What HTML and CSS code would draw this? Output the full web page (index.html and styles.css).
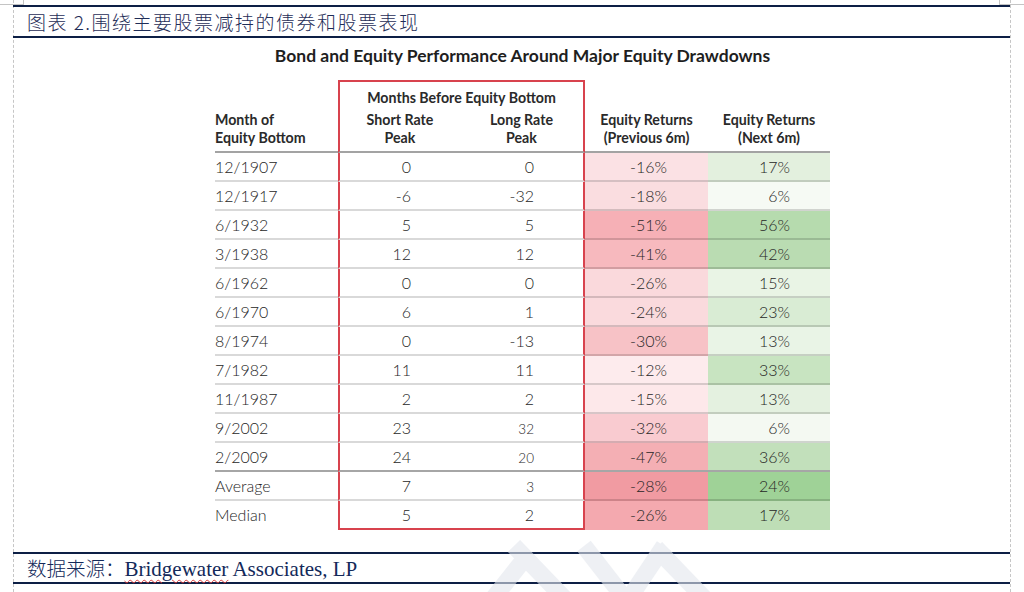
FILE: index.html
```html
<!DOCTYPE html>
<html lang="zh">
<head>
<meta charset="utf-8">
<title>图表 2.围绕主要股票减持的债券和股票表现</title>
<link rel="stylesheet" href="styles.css">
</head>
<body>
<div class="page">
  <span class="corner corner-tl"></span>
  <span class="corner corner-tr"></span>
  <div class="sheet">
    <div class="caption">图表 2.围绕主要股票减持的债券和股票表现</div>
    <div class="figure">
      <h1 class="chart-title">Bond and Equity Performance Around Major Equity Drawdowns</h1>
      <table class="perf">
        <colgroup>
          <col class="c-month"><col class="c-short"><col class="c-long"><col class="c-prev"><col class="c-next">
        </colgroup>
        <thead>
          <tr>
            <th rowspan="2" class="h-month">Month of<br>Equity Bottom</th>
            <th colspan="2" class="h-group">Months Before Equity Bottom</th>
            <th rowspan="2" class="h-ret">Equity Returns<br>(Previous 6m)</th>
            <th rowspan="2" class="h-ret">Equity Returns<br>(Next 6m)</th>
          </tr>
          <tr>
            <th class="h-sub short">Short Rate<br>Peak</th>
            <th class="h-sub long">Long Rate<br>Peak</th>
          </tr>
        </thead>
        <tbody>
          <tr><td class="month">12/1907</td><td class="short">0</td><td class="long">0</td><td class="prev" style="background:#fbe1e4">-16%</td><td class="next" style="background:#e3f0de">17%</td></tr>
          <tr><td class="month">12/1917</td><td class="short">-6</td><td class="long">-32</td><td class="prev" style="background:#fadde0">-18%</td><td class="next" style="background:#f6faf4">6%</td></tr>
          <tr><td class="month">6/1932</td><td class="short">5</td><td class="long">5</td><td class="prev" style="background:#f6b0b6">-51%</td><td class="next" style="background:#b6dbae">56%</td></tr>
          <tr><td class="month">3/1938</td><td class="short">12</td><td class="long">12</td><td class="prev" style="background:#f7b9be">-41%</td><td class="next" style="background:#badcb2">42%</td></tr>
          <tr><td class="month">6/1962</td><td class="short">0</td><td class="long">0</td><td class="prev" style="background:#fad9dc">-26%</td><td class="next" style="background:#e9f4e5">15%</td></tr>
          <tr><td class="month">6/1970</td><td class="short">6</td><td class="long">1</td><td class="prev" style="background:#fadadd">-24%</td><td class="next" style="background:#d9ecd4">23%</td></tr>
          <tr><td class="month">8/1974</td><td class="short">0</td><td class="long">-13</td><td class="prev" style="background:#f7c2c6">-30%</td><td class="next" style="background:#e9f4e6">13%</td></tr>
          <tr><td class="month">7/1982</td><td class="short">11</td><td class="long">11</td><td class="prev" style="background:#fdebed">-12%</td><td class="next" style="background:#c8e4c1">33%</td></tr>
          <tr><td class="month">11/1987</td><td class="short">2</td><td class="long">2</td><td class="prev" style="background:#fde8ea">-15%</td><td class="next" style="background:#e4f1e0">13%</td></tr>
          <tr><td class="month">9/2002</td><td class="short">23</td><td class="long"><span class="small">32</span></td><td class="prev" style="background:#f9cbd0">-32%</td><td class="next" style="background:#f4f9f2">6%</td></tr>
          <tr class="before-summary"><td class="month">2/2009</td><td class="short">24</td><td class="long"><span class="small">20</span></td><td class="prev" style="background:#f4afb4">-47%</td><td class="next" style="background:#c2e0bb">36%</td></tr>
          <tr><td class="month">Average</td><td class="short">7</td><td class="long"><span class="small">3</span></td><td class="prev" style="background:#f19ba2">-28%</td><td class="next" style="background:#9fd297">24%</td></tr>
          <tr class="last"><td class="month">Median</td><td class="short">5</td><td class="long">2</td><td class="prev" style="background:#f4a9af">-26%</td><td class="next" style="background:#bedeb6">17%</td></tr>
        </tbody>
      </table>
    </div>
    <div class="source"><span class="source-label">数据来源：</span><span class="spell">Bridgewater</span> Associates, LP</div>
  </div>
  <svg class="watermark" width="1024" height="592" viewBox="0 0 1024 592" aria-hidden="true">
    <g stroke="#e3e7ee" stroke-width="17" stroke-linecap="butt" opacity="0.6">
      <line x1="492" y1="600" x2="522" y2="562"/>
      <line x1="514" y1="546" x2="566" y2="600"/>
      <line x1="584" y1="546" x2="626" y2="600"/>
      <line x1="664" y1="546" x2="628" y2="600"/>
      <line x1="656" y1="548" x2="706" y2="600"/>
    </g>
  </svg>
</div>
</body>
</html>
```

FILE: styles.css
```css
* {
  box-sizing: border-box;
}

html,
body {
  margin: 0;
  padding: 0;
  background: #ffffff;
}

body {
  width: 1024px;
  height: 592px;
  overflow: hidden;
  font-family: Lato, "Noto Sans", sans-serif;
}

.page {
  position: relative;
  height: 592px;
  padding-left: 13px;
}

.corner {
  position: absolute;
  width: 24px;
  height: 5px;
  border-color: #c4c4c4;
  border-style: solid;
  border-width: 0;
}

.corner-tl {
  left: 0;
  top: 0;
  border-right-width: 1px;
  border-bottom-width: 1px;
}

.corner-tr {
  left: 999px;
  top: 0;
  width: 25px;
  border-left-width: 1px;
  border-bottom-width: 1px;
}

.sheet {
  position: relative;
  z-index: 1;
  width: 998px;
  height: 592px;
  padding-top: 5px;
  border-left: 1px dashed #c6c6c6;
  border-right: 1px dashed #c6c6c6;
}

.caption {
  margin-left: -1px;
  height: 33px;
  padding-left: 14px;
  border-top: 2px solid #0d1f45;
  border-bottom: 2px solid #0d1f45;
  font-family: "Noto Sans CJK SC", sans-serif;
  font-size: 19px;
  font-weight: 300;
  letter-spacing: 1.5px;
  line-height: 29px;
  color: #1f2d57;
  white-space: nowrap;
}

.figure {
  width: 615px;
  margin: 8px 0 0 201px;
}

.chart-title {
  margin: 0 0 14px -30px;
  width: 675px;
  font-family: Lato, "Noto Sans", sans-serif;
  font-size: 17.5px;
  line-height: 20px;
  font-weight: 700;
  color: #1e1e1e;
  text-align: center;
  white-space: nowrap;
}

.perf {
  width: 615px;
  table-layout: fixed;
  border-collapse: separate;
  border-spacing: 0;
  font-family: Lato, "Noto Sans", sans-serif;
  color: #262626;
}

.c-month { width: 123px; }
.c-short { width: 122px; }
.c-long { width: 125px; }
.c-prev { width: 123px; }
.c-next { width: 122px; }

.perf th {
  padding: 0;
  font-size: 14.2px;
  line-height: 18px;
  font-weight: 700;
  color: #2a2a2a;
  text-align: center;
  vertical-align: bottom;
  white-space: nowrap;
}

.perf th.h-month {
  text-align: left;
  padding-bottom: 4px;
  border-bottom: 2px solid #a3a3a3;
}

.perf th.h-group {
  padding-top: 7px;
  border-top: 2px solid #d8434e;
  border-left: 2px solid #d8434e;
  border-right: 2px solid #d8434e;
}

.perf th.h-ret {
  padding-bottom: 4px;
  border-bottom: 2px solid #a3a3a3;
}

.perf th.h-sub {
  padding-top: 4px;
  padding-bottom: 4px;
  border-bottom: 2px solid #a3a3a3;
}

.perf td {
  padding: 0;
  height: 29px;
  font-size: 16px;
  line-height: 27px;
  font-weight: 300;
  white-space: nowrap;
  vertical-align: middle;
  border-bottom: 2px solid rgba(0, 0, 0, 0.15);
}

.perf .short {
  border-left: 2px solid #d8434e;
}

.perf .long {
  border-right: 2px solid #d8434e;
}

.perf td.month {
  text-align: left;
}

.perf td.short {
  text-align: right;
  padding-right: 49px;
}

.perf td.long {
  text-align: right;
  padding-right: 49px;
}

.perf td.prev {
  text-align: right;
  padding-right: 41px;
}

.perf td.next {
  text-align: right;
  padding-right: 40px;
}

.perf .small {
  font-size: 13.5px;
  line-height: 1;
}

.perf tr.before-summary td {
  border-bottom-color: #a6a6a6;
}

.perf tr.last td {
  border-bottom-color: transparent;
}

.perf tr.last td.short,
.perf tr.last td.long {
  border-bottom-color: #d8434e;
}

.source {
  margin-top: 22px;
  margin-left: -1px;
  height: 32px;
  padding-left: 14px;
  border-top: 2px solid #0d1f45;
  border-bottom: 2px solid #0d1f45;
  font-family: "Liberation Serif", "Noto Sans CJK SC", serif;
  font-size: 21px;
  line-height: 27px;
  color: #13295a;
  white-space: nowrap;
}

.source-label {
  font-family: "Noto Sans CJK SC", serif;
  font-size: 19.5px;
  font-weight: 300;
}

.spell {
  text-decoration: underline wavy #d93a3a;
  text-decoration-thickness: 1px;
  text-underline-offset: 3px;
}

.watermark {
  position: absolute;
  left: 0;
  top: 0;
  z-index: 2;
  pointer-events: none;
}
```
